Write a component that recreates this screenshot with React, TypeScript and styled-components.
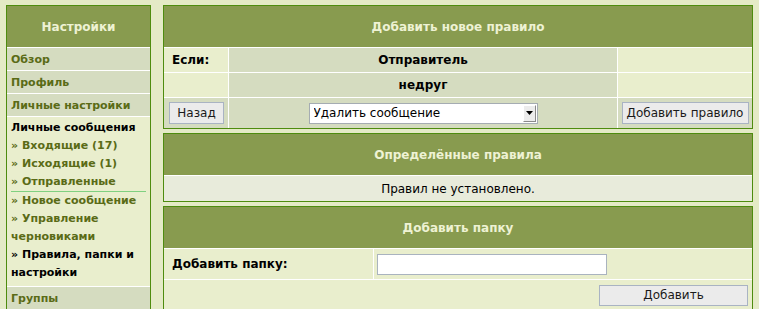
import React from 'react'
import styled, { createGlobalStyle } from 'styled-components'

//Global
const GlobalStyle = createGlobalStyle`
  html, body {
    margin: 0;
    padding: 0;
    background: #e4eac6;
  }
  body {
    font-family: "DejaVu Sans", Verdana, sans-serif;
    font-size: 12px;
    color: #000;
  }
  * {
    box-sizing: border-box;
  }
`

//Layout
const Page = styled.div`
  display: flex;
  align-items: flex-start;
  gap: 12px;
  padding: 5px 6px;
`

//Sidebar
const Sidebar = styled.nav`
  width: 145px;
  flex: none;
  display: flex;
  flex-direction: column;
  gap: 1px;
  border: 1px solid #4e8c0e;
  background: #fff;
`
const SideHeader = styled.div`
  height: 41px;
  display: flex;
  align-items: center;
  justify-content: center;
  background: #889b4f;
  color: #eef2d4;
  font-size: 12px;
  font-weight: bold;
`
const SideItem = styled.a`
  height: 22px;
  display: flex;
  align-items: center;
  padding-left: 4px;
  background: #d5dcc0;
  color: #5a6b16;
  font-size: 11px;
  font-weight: bold;
  text-decoration: none;
`
const SideSection = styled.div`
  padding: 2px 4px 4px;
  background: #e9eecd;
  font-size: 11px;
  font-weight: bold;
  line-height: 18px;
`
const SectionTitle = styled.div`
  color: #000;
`
const SectionLink = styled.a<{ $current?: boolean; $divider?: boolean }>`
  display: block;
  color: ${(p) => (p.$current ? '#000' : '#5a6b16')};
  text-decoration: none;
  border-bottom: ${(p) => (p.$divider ? '1px solid #80d080' : 'none')};
`

//Main panels
const Main = styled.main`
  flex: 1;
  display: flex;
  flex-direction: column;
  gap: 4px;
`
const Panel = styled.section<{ $cols: string }>`
  display: grid;
  grid-template-columns: ${(p) => p.$cols};
  gap: 1px;
  border: 1px solid #4e8c0e;
  background: #fff;
`
const PanelHeader = styled.h2`
  grid-column: 1 / -1;
  height: 41px;
  margin: 0;
  display: flex;
  align-items: center;
  justify-content: center;
  background: #889b4f;
  color: #eef2d4;
  font-size: 12px;
  font-weight: bold;
`

const tones = {
  light: '#e9eecd',
  dark: '#d5dcc0',
  gray: '#e8ebdb',
}

const Cell = styled.div<{
  $tone: keyof typeof tones
  $align?: 'flex-start' | 'center' | 'flex-end'
  $height: number
  $bold?: boolean
  $pad?: string
  $span?: boolean
}>`
  grid-column: ${(p) => (p.$span ? '1 / -1' : 'auto')};
  height: ${(p) => p.$height}px;
  display: flex;
  align-items: center;
  justify-content: ${(p) => p.$align || 'flex-start'};
  padding: ${(p) => p.$pad || '0'};
  background: ${(p) => tones[p.$tone]};
  font-weight: ${(p) => (p.$bold ? 'bold' : 'normal')};
  font-size: 12px;
`

//Form controls
const Button = styled.button<{ $width: number; $height?: number }>`
  width: ${(p) => p.$width}px;
  height: ${(p) => p.$height || 22}px;
  padding: 0;
  border: 1px solid #a9b3c3;
  background: #ebebeb;
  color: #1a1a1a;
  font-family: "DejaVu Sans", Verdana, sans-serif;
  font-size: 12px;
`
const SelectBox = styled.div`
  width: 229px;
  height: 21px;
  display: flex;
  align-items: stretch;
  border: 1px solid #a5acb2;
  background: #fff;
`
const Select = styled.select`
  flex: 1;
  min-width: 0;
  border: none;
  outline: none;
  appearance: none;
  background: transparent;
  padding: 0 0 0 4px;
  color: #000;
  font-family: "DejaVu Sans", Verdana, sans-serif;
  font-size: 12px;
`
const SelectArrow = styled.span`
  width: 13px;
  margin: 1px;
  display: flex;
  align-items: center;
  justify-content: center;
  background: #ececec;
  border-right: 1px solid #8a8a8a;
  border-bottom: 1px solid #8a8a8a;
  border-top: 1px solid #fff;
  border-left: 1px solid #fff;
`
const TextInput = styled.input`
  width: 230px;
  height: 21px;
  border: 1px solid #a9b3bf;
  background: #fff;
  font-family: "DejaVu Sans", Verdana, sans-serif;
  font-size: 12px;
`

const sectionLinks = [
  { label: '» Входящие (17)' },
  { label: '» Исходящие (1)' },
  { label: '» Отправленные', divider: true },
  { label: '» Новое сообщение' },
  { label: '» Управление черновиками' },
  { label: '» Правила, папки и настройки', current: true },
]

const App: React.FC = () => {
  return (
    <>
      <GlobalStyle />
      <Page>
        <Sidebar>
          <SideHeader>Настройки</SideHeader>
          <SideItem href="#">Обзор</SideItem>
          <SideItem href="#">Профиль</SideItem>
          <SideItem href="#">Личные настройки</SideItem>
          <SideSection>
            <SectionTitle>Личные сообщения</SectionTitle>
            {sectionLinks.map((link) => (
              <SectionLink
                key={link.label}
                href="#"
                $divider={link.divider}
                $current={link.current}
              >
                {link.label}
              </SectionLink>
            ))}
          </SideSection>
          <SideItem href="#">Группы</SideItem>
        </Sidebar>

        <Main>
          <Panel $cols="64px 388px 1fr">
            <PanelHeader>Добавить новое правило</PanelHeader>
            <Cell $tone="light" $height={24} $bold $pad="0 0 0 8px">
              Если:
            </Cell>
            <Cell $tone="dark" $height={24} $bold $align="center">
              Отправитель
            </Cell>
            <Cell $tone="light" $height={24} />
            <Cell $tone="light" $height={24} />
            <Cell $tone="dark" $height={24} $bold $align="center">
              недруг
            </Cell>
            <Cell $tone="light" $height={24} />
            <Cell $tone="dark" $height={30} $pad="0 0 0 5px">
              <Button $width={55}>Назад</Button>
            </Cell>
            <Cell $tone="dark" $height={30} $align="center">
              <SelectBox>
                <Select defaultValue="delete">
                  <option value="delete">Удалить сообщение</option>
                </Select>
                <SelectArrow>
                  <svg width="7" height="4" viewBox="0 0 7 4">
                    <path d="M0 0h7L3.5 4z" fill="#000" />
                  </svg>
                </SelectArrow>
              </SelectBox>
            </Cell>
            <Cell $tone="dark" $height={30} $align="center">
              <Button $width={127}>Добавить правило</Button>
            </Cell>
          </Panel>

          <Panel $cols="1fr">
            <PanelHeader>Определённые правила</PanelHeader>
            <Cell $tone="gray" $height={25} $align="center">
              Правил не установлено.
            </Cell>
          </Panel>

          <Panel $cols="209px 1fr">
            <PanelHeader>Добавить папку</PanelHeader>
            <Cell $tone="light" $height={30} $bold $pad="0 0 0 8px">
              Добавить папку:
            </Cell>
            <Cell $tone="light" $height={30} $pad="0 0 0 3px">
              <TextInput type="text" />
            </Cell>
            <Cell $tone="light" $height={30} $span $align="flex-end" $pad="0 4px">
              <Button $width={149} $height={21}>
                Добавить
              </Button>
            </Cell>
          </Panel>
        </Main>
      </Page>
    </>
  )
}

export default App
